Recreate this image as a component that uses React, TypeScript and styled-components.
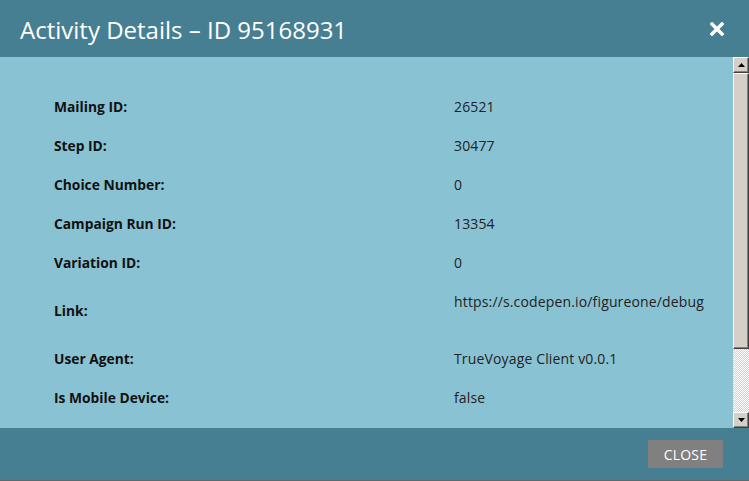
import styled, { createGlobalStyle } from "styled-components";

const GlobalStyle = createGlobalStyle`
  html, body {
    margin: 0;
    padding: 0;
    background: #666;
  }
  body {
    font-family: "Open Sans", "DejaVu Sans", sans-serif;
  }
`;

const Dialog = styled.div`
  display: flex;
  flex-direction: column;
  width: 749px;
  height: 480px;
  background: #89c2d2;
`;

const Header = styled.div`
  display: flex;
  align-items: center;
  justify-content: space-between;
  height: 57px;
  flex-shrink: 0;
  padding: 0 24px 0 20px;
  box-sizing: border-box;
  background: #467f91;
`;

const Title = styled.h1`
  margin: 0;
  font-size: 24px;
  font-weight: 400;
  line-height: 1;
  color: #fff;
  padding-top: 2px;
`;

const CloseIcon = styled.button`
  display: flex;
  align-items: center;
  justify-content: center;
  width: 16px;
  height: 16px;
  padding: 0;
  border: 0;
  background: none;
  cursor: pointer;
`;

const Body = styled.div`
  flex: 1;
  min-height: 0;
  display: flex;
`;

const Content = styled.div`
  flex: 1;
  overflow: hidden;
`;

const Scrollbar = styled.div`
  display: flex;
  flex-direction: column;
  width: 16px;
  flex-shrink: 0;
  background: repeating-conic-gradient(#d4d0c8 0 25%, #fff 0 50%) 0 0 / 2px 2px;
`;

const raised = `
  box-sizing: border-box;
  background: #d4d0c8;
  border-style: solid;
  border-width: 1px;
  border-color: #fff #404040 #404040 #fff;
  box-shadow: inset -1px -1px 0 #808080;
`;

const ScrollButton = styled.div`
  ${raised}
  display: flex;
  align-items: center;
  justify-content: center;
  height: 16px;
  flex-shrink: 0;
`;

const Thumb = styled.div`
  ${raised}
  height: 276px;
  flex-shrink: 0;
`;

const Track = styled.div`
  flex: 1;
`;

const Details = styled.div`
  display: flex;
  flex-direction: column;
  padding: 30px 0 0 54px;
`;

const Row = styled.div<{ $tall?: boolean }>`
  display: grid;
  grid-template-columns: 400px 1fr;
  align-items: center;
  height: ${({ $tall }) => ($tall ? "57px" : "39px")};
  font-size: 14px;
  line-height: 19px;
`;

const Label = styled.div`
  font-weight: 700;
  color: #111;
  font-size: 13.8px;
`;

const Value = styled.div<{ $top?: boolean }>`
  color: #222;
  letter-spacing: 0.15px;
  align-self: ${({ $top }) => ($top ? "start" : "center")};
  padding-top: ${({ $top }) => ($top ? "10px" : "0")};
`;

const Footer = styled.div`
  display: flex;
  align-items: center;
  justify-content: flex-end;
  height: 52px;
  flex-shrink: 0;
  padding-right: 26px;
  background: #467f91;
`;

const CloseButton = styled.button`
  width: 75px;
  height: 28px;
  border: 0;
  background: #808080;
  color: #fff;
  font-family: "Open Sans", sans-serif;
  font-size: 14px;
  letter-spacing: 0.2px;
  cursor: pointer;
`;

const Arrow = ({ down }: { down?: boolean }) => (
  <svg width="7" height="4" viewBox="0 0 7 4">
    <path d={down ? "M0 0 H7 L3.5 4 Z" : "M0 4 H7 L3.5 0 Z"} fill="#000" />
  </svg>
);

const rows: { label: string; value: string; tall?: boolean }[] = [
  { label: "Mailing ID:", value: "26521" },
  { label: "Step ID:", value: "30477" },
  { label: "Choice Number:", value: "0" },
  { label: "Campaign Run ID:", value: "13354" },
  { label: "Variation ID:", value: "0" },
  { label: "Link:", value: "https://s.codepen.io/figureone/debug", tall: true },
  { label: "User Agent:", value: "TrueVoyage Client v0.0.1" },
  { label: "Is Mobile Device:", value: "false" },
];

export default function App() {
  return (
    <>
      <GlobalStyle />
      <Dialog>
        <Header>
          <Title>Activity Details – ID 95168931</Title>
          <CloseIcon aria-label="Close">
            <svg width="14" height="14" viewBox="0 0 14 14">
              <path d="M2 2 L12 12 M12 2 L2 12" stroke="#fff" strokeWidth="3.4" strokeLinecap="square" />
            </svg>
          </CloseIcon>
        </Header>
        <Body>
          <Content>
            <Details>
              {rows.map((r) => (
                <Row key={r.label} $tall={r.tall}>
                  <Label>{r.label}</Label>
                  <Value $top={r.tall}>{r.value}</Value>
                </Row>
              ))}
            </Details>
          </Content>
          <Scrollbar>
            <ScrollButton>
              <Arrow />
            </ScrollButton>
            <Thumb />
            <Track />
            <ScrollButton>
              <Arrow down />
            </ScrollButton>
          </Scrollbar>
        </Body>
        <Footer>
          <CloseButton>CLOSE</CloseButton>
        </Footer>
      </Dialog>
    </>
  );
}
